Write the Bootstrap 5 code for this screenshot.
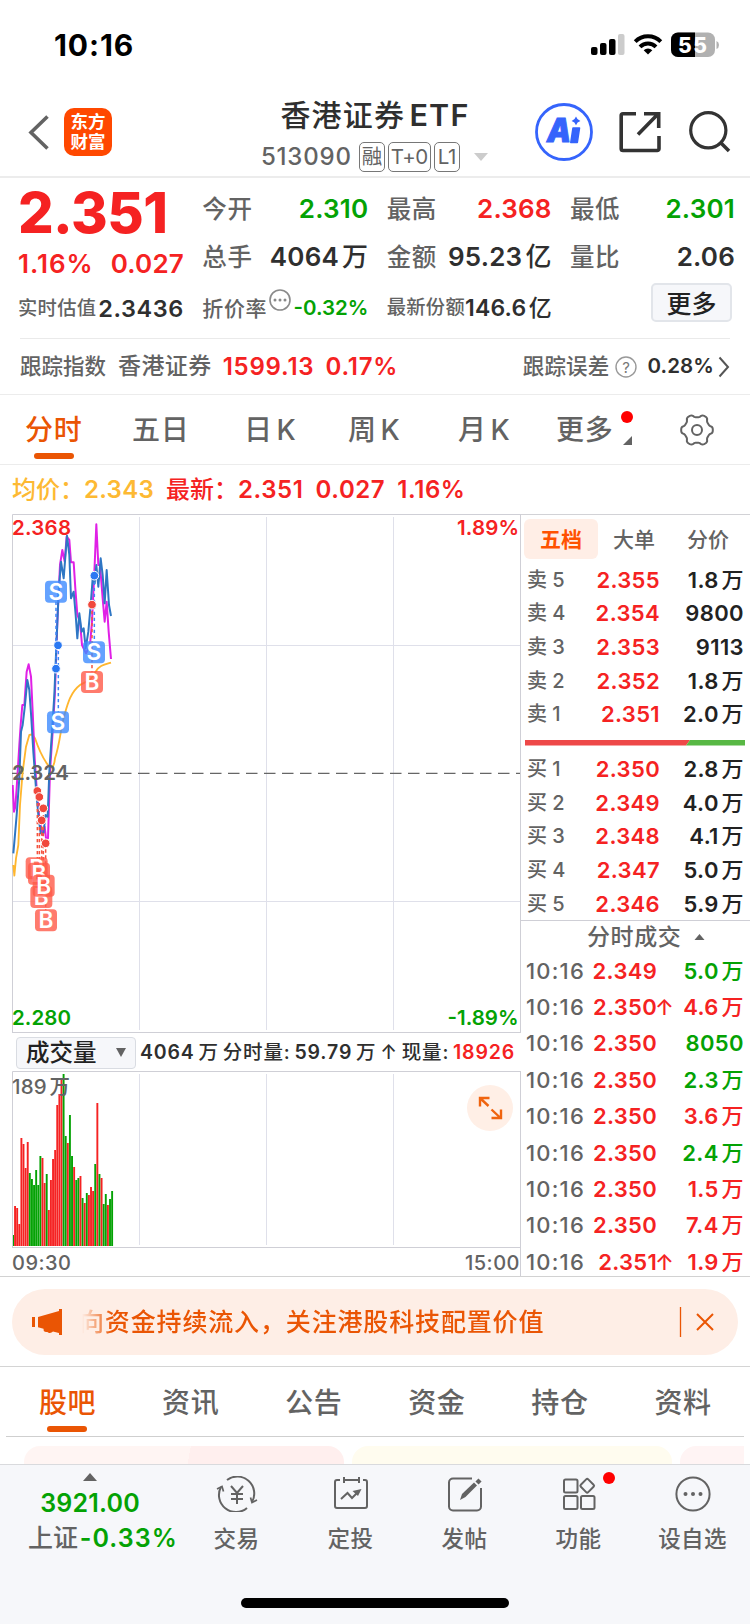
<!DOCTYPE html>
<html lang="zh-CN">
<head>
<meta charset="utf-8">
<meta name="viewport" content="width=device-width, initial-scale=1">
<title>香港证券ETF 513090</title>
<link href="https://cdn.jsdelivr.net/npm/bootstrap@5.3.0/dist/css/bootstrap.min.css" rel="stylesheet">
<style>
:root{--up:#f52222;--down:#04a204;--ink:#2f2f2f;--dim:#636363;--brand:#ea5504;--rule:#d2d2d6}
body{width:750px;height:1624px;overflow:hidden;background:#fff;color:var(--ink);font-family:Inter,"Noto Sans CJK SC",sans-serif;font-weight:500;line-height:1;white-space:nowrap}
svg{display:block;flex:none}
.dim{color:var(--dim)}.brand{color:var(--brand)}
.fig{font-weight:600}
.statusbar{height:90px;padding:0 31px 0 54px}
.clock{font-size:30px;font-weight:700;color:#000;letter-spacing:.9px}
.navtop{height:88px;border-bottom:2px solid #ececec}
.logo{width:48px;height:48px;border-radius:10px;background:#ff4800;color:#fff;font-size:17.5px;line-height:19.5px;font-weight:700;padding-top:4px}
.title{font-size:30px;letter-spacing:1.2px;line-height:36px;word-spacing:-5px}
.code{font-size:24px;letter-spacing:.8px;color:var(--dim)}
.tagbox{height:30px;border:1.5px solid #777;border-radius:5px;font-size:20.5px;font-weight:400;color:var(--dim);padding:0 2px;letter-spacing:-.4px}
.quote{height:160px;margin:0 15px 0 18px}
.c1{width:166px}.c2{width:166px}.c3{width:165px}.c4{width:165px}
.row1{height:48px}
.row3{height:54px}
.lab{font-size:24.5px;letter-spacing:.6px;color:var(--dim)}
.num{font-size:26px;letter-spacing:.2px;word-spacing:-4px}
.price{font-size:56px;font-weight:800;height:70px;line-height:70px;letter-spacing:-.6px;margin-bottom:-2px}
.lab-s{font-size:19.3px;letter-spacing:.3px;color:var(--dim)}
.morebtn{width:81px;height:39px;margin-right:3px;border:2px solid #e2e5ea;border-radius:5px;background:#f6f7fa;font-size:25px;color:#222;padding-top:3px}
.track{height:56px;margin:0 20px;border-top:1px solid #eaeaea}
.tabs1{height:71px;border-top:1px solid #ececec;border-bottom:1px solid #ececec;font-size:28px;color:var(--dim);letter-spacing:.8px;word-spacing:-4.5px}
.tabs1>div{position:relative}
.mark-line{position:absolute;height:6px;width:40px;border-radius:3px;background:var(--brand)}
.info{height:49px;padding:1px 0 0 12px;font-size:24px}
.info .fig{letter-spacing:.6px}
.market{height:763px;border-bottom:1px solid #d2d2d2}
.chartcol{width:509px;margin-left:12px}
.volhead{height:38px;font-size:19.5px;letter-spacing:.85px;word-spacing:-2.2px;padding-top:1px}
.volbtn{width:120px;height:32px;border:1.5px solid #d9dce2;border-radius:4px;background:#f6f7fa;font-size:23.5px;color:#222;letter-spacing:0}
.axis{height:28px;font-size:20px;color:var(--dim);letter-spacing:.5px;padding-top:1px}
.expand{position:absolute;left:455px;top:14px}
.side{width:229px;border-top:1px solid var(--rule);overflow:hidden}
.sidetabs{height:48px;font-size:21px;color:var(--dim);padding:4px 0 0 3px}
.sidetabs .on{width:74px;height:40px;border-radius:6px;background:#ffeee6;color:#ff5200;font-weight:700}
.depth{padding:0 6px;font-size:22px}
.depth>div{height:33.65px}
.k{width:54px;font-size:20px;letter-spacing:.5px;word-spacing:-1px}
.p{width:79px;text-align:right;letter-spacing:.35px}
.v{width:84px;text-align:right;color:#222;letter-spacing:.4px;word-spacing:-3.5px}
.ticks>div{height:36.4px;padding:0 6px 0 5px;font-size:22px}
.up,.v.up{color:var(--up)}.down,.v.down{color:var(--down)}
.banner{margin:12px 12px 11px;height:66px;border-radius:33px;background:#feeee6;color:var(--brand);font-size:25px;letter-spacing:.85px}
.marquee{-webkit-mask-image:linear-gradient(90deg,transparent 0,#000 30px);mask-image:linear-gradient(90deg,transparent 0,#000 30px);width:500px;overflow:hidden;height:34px}
.tabs2{height:70px;border-top:1px solid #d4d4d4;font-size:28px;color:var(--dim);letter-spacing:.6px;padding:3px 0 0 6px}
.tabs2>div{width:123.1px;position:relative}
.peek{height:28px;margin:0 6px;padding:9px 0 0 18px;border-top:1px solid #cfcfcf;overflow:hidden}
.peek>div{height:40px;border-radius:16px;flex:none}
.dock{height:160px;border-top:1px solid #d9dadd;background:#f6f7fa;position:relative}
.dock .it{width:114px;font-size:22.5px;letter-spacing:.4px;color:var(--dim);padding-top:11px;position:relative}
.dock .lb{height:36px;line-height:36px;margin-top:9px;margin-left:-1px}
.homebar{position:absolute;left:241px;top:133px;width:268px;height:10px;border-radius:5px;background:#000}
.dot{position:absolute;width:12px;height:12px;border-radius:6px;background:#f00}
</style>
</head>
<body>
<header>
<div class="statusbar d-flex align-items-center justify-content-between">
 <span class="clock">10:16</span>
 <svg width="130" height="28" viewBox="0 0 130 28"><g transform="translate(-589 -31)">
  <rect x="591" y="47" width="6.5" height="8" rx="2"/><rect x="600" y="43" width="6.5" height="12" rx="2"/><rect x="609" y="39" width="6.5" height="16" rx="2"/><rect x="618" y="34" width="6.5" height="21" rx="2" fill="#ccc"/>
  <g fill="none" stroke="#000" stroke-width="4"><path d="M635.2 41.6a18.2 18.2 0 0 1 25.6 0"/><path d="M640 46.8a11.4 11.4 0 0 1 16 0"/></g><path d="M648 54.6l-4.3-4.4a6.2 6.2 0 0 1 8.600 0z"/>
  <rect x="671" y="32.500" width="44" height="24.500" rx="7" fill="#b1b1b1"/><path d="M695 32.500h-17a7 7 0 0 0-7 7V50a7 7 0 0 0 7 7h17z"/><path d="M716.500 41q2.500 1 2.500 4t-2.500 4z" fill="#b1b1b1"/>
  <text x="692.500" y="52.500" font-size="21" font-weight="800" fill="#fff" text-anchor="middle" textLength="29">55</text></g></svg>
</div>
<div class="navtop d-flex">
 <svg width="64" height="86" viewBox="0 2 64 86"><path d="M47.500 28.500 31 44.500 47.500 60.500" fill="none" stroke="#636363" stroke-width="3.6"/></svg>
 <div class="logo text-center" style="margin-top:18px">东方<br>财富</div>
 <div class="flex-fill d-flex flex-column align-items-center" style="padding-left:103px">
  <div class="title" style="margin-top:7px">香港证券 <span style="font-size:30.500px;font-weight:600">ETF</span></div>
  <div class="d-flex align-items-center" style="height:30px;gap:3px;margin-top:9px">
   <span class="code" style="margin-right:4px">513090</span><span class="tagbox d-flex align-items-center">融</span><span class="tagbox d-flex align-items-center">T+0</span><span class="tagbox d-flex align-items-center" style="padding:0 3px">L1</span>
   <svg style="margin-left:10px" width="16" height="8" viewBox="0 0 16 8"><path d="M1 0h14L8 8z" fill="#ccc"/></svg>
  </div>
 </div>
 <svg width="215" height="86" viewBox="535 90 215 86" fill="none" stroke="#333" stroke-width="3.600">
  <circle cx="564" cy="132" r="27.500" stroke="#3564fc" stroke-width="2.800"/>
  <text x="547" y="142" font-size="33" font-weight="900" font-style="italic" fill="#3564fc" stroke="#3564fc" stroke-width="1" textLength="24" lengthAdjust="spacingAndGlyphs">A</text><path d="M573 128h6.500l-2.200 14.500h-6.500z" fill="#3564fc" stroke="#3564fc" stroke-width="1.600" stroke-linejoin="round"/><path d="M576 116.500q1 3.300 4.400 4.400-3.400 1-4.400 4.400-1-3.400-4.400-4.400 3.400-1.100 4.400-4.400z" fill="#3564fc" stroke="none"/>
  <path d="M636 113.700h-13a1.800 1.800 0 0 0-1.800 1.800v33.200a1.800 1.800 0 0 0 1.800 1.800h34.200a1.800 1.800 0 0 0 1.800-1.800V136"/><path d="M644 113.700h14.700V128M658 114l-20 20.500"/>
  <circle cx="708.300" cy="130.300" r="17.600" stroke-width="3.200"/><path d="M720.500 142.500l8.500 8.500"/>
 </svg>
</div>
</header>

<section class="quote d-flex justify-content-between">
 <div class="c1">
  <div class="price up">2.351</div>
  <div class="num fig up d-flex justify-content-between align-items-center" style="height:36px"><span style="letter-spacing:1px">1.16%</span><span>0.027</span></div>
  <div class="d-flex justify-content-between align-items-center row3"><span class="lab-s">实时估值</span><span class="fig" style="font-size:23.500px;letter-spacing:.6px">2.3436</span></div>
 </div>
 <div class="c2" style="padding-top:7px">
  <div class="row1 d-flex justify-content-between align-items-center"><span class="lab">今开</span><span class="num fig down">2.310</span></div>
  <div class="row1 d-flex justify-content-between align-items-center"><span class="lab">总手</span><span class="num"><span class="fig">4064</span> 万</span></div>
  <div class="row3 d-flex justify-content-between align-items-center"><span class="lab" style="font-size:21px">折价率</span><svg width="24" height="40" viewBox="0 0 24 40"><circle cx="12" cy="12" r="10" fill="none" stroke="#8a8a8a" stroke-width="1.600"/><g fill="#888"><circle cx="7" cy="12" r="1.500"/><circle cx="12" cy="12" r="1.500"/><circle cx="17" cy="12" r="1.500"/></g></svg><span class="down fig" style="font-size:20.500px">-0.32%</span></div>
 </div>
 <div class="c3" style="padding-top:7px">
  <div class="row1 d-flex justify-content-between align-items-center"><span class="lab">最高</span><span class="num fig up">2.368</span></div>
  <div class="row1 d-flex justify-content-between align-items-center"><span class="lab">金额</span><span class="num"><span class="fig">95.23</span> 亿</span></div>
  <div class="row3 d-flex justify-content-between align-items-center"><span class="lab-s">最新份额</span><span style="font-size:23px;letter-spacing:.2px;word-spacing:-4px"><span class="fig">146.6</span> 亿</span></div>
 </div>
 <div class="c4" style="padding-top:7px">
  <div class="row1 d-flex justify-content-between align-items-center"><span class="lab">最低</span><span class="num fig down">2.301</span></div>
  <div class="row1 d-flex justify-content-between align-items-center"><span class="lab">量比</span><span class="num fig">2.06</span></div>
  <div class="d-flex justify-content-end" style="padding-top:2px"><div class="morebtn d-flex align-items-center justify-content-center">更多</div></div>
 </div>
</section>

<section class="track d-flex align-items-center">
 <span class="dim" style="font-size:21.500px">跟踪指数</span><span class="dim" style="font-size:23px;margin-left:12px;letter-spacing:.4px">香港证券</span><span class="up fig" style="font-size:24px;margin-left:11px;letter-spacing:.8px">1599.13</span><span class="up fig" style="font-size:24px;margin-left:11px;letter-spacing:.8px">0.17%</span>
 <span class="dim ms-auto" style="font-size:21.500px;letter-spacing:.2px">跟踪误差</span>
 <svg style="margin:0 11px 0 5px" width="22" height="22" viewBox="0 0 22 22"><circle cx="11" cy="11" r="10" fill="none" stroke="#999" stroke-width="1.400"/><text x="11" y="16.500" font-size="15" font-weight="400" fill="#777" text-anchor="middle">?</text></svg>
 <span class="fig" style="font-size:20.500px;letter-spacing:.1px">0.28%</span>
 <svg class="ms-1" width="12" height="22" viewBox="0 0 12 22"><path d="M1.500 1.500 10 11 1.500 20.500" fill="none" stroke="#555" stroke-width="2"/></svg>
</section>

<nav class="tabs1 d-flex align-items-center">
 <div class="brand" style="margin-left:25px;width:107px">分时<i class="mark-line" style="left:9px;top:37px"></i></div>
 <div style="width:112px">五日</div><div style="width:104px">日 K</div><div style="width:110px">周 K</div><div style="width:98px">月 K</div>
 <div style="width:123px">更多<i class="dot" style="left:65px;top:-5px"></i><svg style="position:absolute;left:67px;top:20px" width="9" height="9" viewBox="0 0 9 9"><path d="M9 0v9H0z" fill="#636363"/></svg></div>
 <svg width="36" height="36" viewBox="-18 -18 36 36" fill="none" stroke="#636363" stroke-width="2"><circle r="5"/><path id="gear"/></svg>
</nav>

<div class="info d-flex align-items-center"><span style="color:#fdb933;width:154px">均价：<span class="fig" style="letter-spacing:.3px">2.343</span></span><span class="up">最新：</span><span class="up fig" style="margin-right:12px">2.351</span><span class="up fig" style="margin-right:12px">0.027</span><span class="up fig">1.16%</span></div>

<main class="market d-flex">
 <div class="chartcol">
  <svg width="509" height="519" viewBox="12 514 509 519">
   <g fill="none" stroke="#dfe0ea"><path d="M139.500 517v513M266.500 517v513M393.500 517v513M12 645.500h508M12 901.500h508"/><path d="M12.500 1032V514.500H521M520.500 514v519M12 1032.500h509" stroke="#cfcfd6"/></g>
   <path d="M12 773.300h508" stroke="#666" stroke-width="1.300" stroke-dasharray="11.500 6.500" fill="none"/>
   <g fill="none" stroke-linejoin="round" transform="translate(0 505) scale(.33333)">
    <path stroke="#ffb62e" stroke-width="5.500" d="M40 1080L43 1112 48 1060 55 1020 60 900 68 800 78 725 88 690 96 688 105 700Q120 745 140 775T165 760C180 715 182 670 192 635S210 563 240 540C262 528 275 525 285 503S315 478 333 473"/>
    <path stroke="#e020e6" stroke-width="6" d="M38 840L42 920 46 905 50 850 58 720 62 660 67 600 73 600 80 500 86 478 93 515 98 620 104 760 110 850 118 940 128 990 134 965 138 1000 144 1000 150 800 158 680 165 560 172 350 180 180 187 135 194 170 200 95 208 105 213 172 221 172 226 250 232 330 240 350 246 420 258 445 270 420 276 350 284 180 289 58 295 180 300 180 308 280 314 350 320 290 326 380 333 462"/>
    <path stroke="#2e76c4" stroke-width="6" d="M40 1045L44 1000 50 930 58 820 63 680 68 660 75 600 82 525 88 555 94 640 100 740 108 850 115 930 122 985 130 985 137 930 143 935 148 800 156 680 163 570 170 400 176 260 183 170 191 220 201 92 208 150 213 280 221 260 227 330 232 400 238 325 245 380 251 370 257 430 265 380 272 300 278 220 284 235 289 180 295 245 302 160 308 210 314 295 320 195 327 300 333 333"/>
    <g stroke-width="4.500" stroke-dasharray="10 8"><path stroke="#3f86f8" d="M168 290V490M175 420V620M283 212V410"/><path stroke="#f4523e" d="M276 300V500M112 858V1060M118 876V1070M130 912V1110M125 946V1140M137 1015V1215"/></g>
    <g stroke="#fff" stroke-width="3"><g fill="#2a78f2"><circle cx="174" cy="421" r="13"/><circle cx="168" cy="491" r="13"/><circle cx="283" cy="212" r="13"/></g><g fill="#f0483c"><circle cx="276" cy="299" r="13"/><circle cx="112" cy="858" r="13"/><circle cx="118" cy="876" r="13"/><circle cx="130" cy="910" r="13"/><circle cx="125" cy="946" r="13"/><circle cx="137" cy="1015" r="13"/></g></g>
    <g stroke="none" font-size="68" font-weight="600" text-anchor="middle" id="flags"></g>
   </g>
   <g font-size="20.500" class="fig"><text x="12" y="535" fill="#f52222" textLength="59">2.368</text><text x="457" y="535" fill="#f52222" textLength="62">1.89%</text><text x="12" y="780" fill="#636363" textLength="57">2.324</text><text x="12" y="1025" fill="#04a204" textLength="59">2.280</text><text x="447.500" y="1025" fill="#04a204" textLength="71">-1.89%</text></g>
  </svg>
  <div class="volhead d-flex align-items-center">
   <div class="volbtn d-flex align-items-center justify-content-between" style="margin-left:4px;padding:0 9px">成交量<svg width="10" height="9" viewBox="0 0 10 9"><path d="M0 0h10L5 9z" fill="#636363"/></svg></div>
   <span style="margin-left:4px"><span class="fig">4064</span> 万 分时量: <span class="fig">59.79</span> 万 ↑ 现量: <span class="up fig">18926</span></span>
  </div>
  <div class="position-relative">
   <svg width="509" height="177" viewBox="12 1071 509 177">
    <g fill="none" stroke="#dfe0ea"><path d="M139.500 1074v171M266.500 1074v171M393.500 1074v171"/><path d="M12.500 1247V1071.500H521M520.500 1071v177M12 1247.500h509" stroke="#cfcfd6"/></g>
    <g id="bars"></g>
    <text x="12" y="1094" font-size="20.500" fill="#636363" textLength="58" word-spacing="-3">189 万</text>
   </svg>
   <svg class="expand" width="46" height="46" viewBox="0 0 46 46"><circle cx="23" cy="23" r="23" fill="#ffefe6"/><path d="M13 21.500V13h9.500M13.500 13.500l8 7.500M34 24.500V33h-9.500M33.500 33l-9-8.500" fill="none" stroke="#f0640f" stroke-width="2.400"/></svg>
  </div>
  <div class="axis d-flex justify-content-between align-items-center" style="border-right:1px solid #cfcfd6"><span>09:30</span><span>15:00</span></div>
 </div>
 <div class="side">
  <div class="sidetabs d-flex"><div class="on d-flex align-items-center justify-content-center">五档</div><div class="d-flex align-items-center" style="height:40px;margin-left:15px">大单</div><div class="d-flex align-items-center" style="height:40px;margin-left:32px">分价</div></div>
  <div class="depth" id="asks"></div>
  <svg width="229" height="21" viewBox="521 731 229 21"><path d="M525 740h165l-4 5.500H525z" fill="#ee4848"/><path d="M690 740h55v5.500h-59z" fill="#58b844"/></svg>
  <div class="depth" id="bids"></div>
  <div class="d-flex align-items-center dim" style="border-top:1px solid #cfcfd6;height:32px;font-size:23px;letter-spacing:.6px;padding:2px 0 0 66px">分时成交<svg style="margin-left:13px;margin-top:-2px" width="11" height="6" viewBox="0 0 10 6"><path d="M5 0l5 6H0z" fill="#636363"/></svg></div>
  <div class="ticks" id="ticks"></div>
 </div>
</main>

<div class="banner d-flex align-items-center">
 <svg width="70" height="66" viewBox="12 1289 70 66" fill="#ea5504"><path d="M32 1317h3v10h-3zM38 1317l21-6v-2h3v26h-3v-2l-6-1.500q-2 2-4.500 1.200l-1.200-.8q-2 .5-3.500-.8l-.3-2.300-5.500-1.500z"/></svg>
 <div class="marquee d-flex align-items-center"><span style="margin-left:-3px">向资金持续流入，关注港股科技配置价值</span></div>
 <svg class="ms-auto" width="60" height="66" viewBox="678 1289 60 66" fill="none" stroke="#ea5504"><path d="M680.500 1307v30" stroke-width="1.300"/><path d="M697 1314l16 16M713 1314l-16 16" stroke-width="2"/></svg>
</div>

<nav class="tabs2 d-flex align-items-center text-center"><div class="brand">股吧<i class="mark-line" style="left:41px;top:37px"></i></div><div>资讯</div><div>公告</div><div>资金</div><div>持仓</div><div>资料</div></nav>
<div class="peek d-flex gap-2"><div style="width:320px;background:linear-gradient(100deg,#fff5f3 51%,#ffefee 51%)"></div><div style="width:320px;background:#fffcef"></div><div style="width:320px;background:#fff4f4"></div></div>

<footer class="dock d-flex text-center">
 <div style="width:180px;padding-top:8px" class="d-flex flex-column align-items-center"><svg width="14" height="8" viewBox="0 0 14 8"><path d="M7 0l7 8H0z" fill="#636363"/></svg><div class="down fig" style="font-size:25px;margin-top:10px;height:25px;letter-spacing:.2px">3921.00</div><div style="font-size:25px;margin-top:10px;padding-left:26px"><span class="dim">上证</span> <span class="down fig" style="margin-left:-5px;letter-spacing:1.1px">-0.33%</span></div></div>
 <div class="it"><svg class="mx-auto" width="42" height="36" viewBox="216 1476 42 36" fill="none" stroke="#636363" stroke-width="2"><path d="M227 1480A17 17 0 0 1 252 1502M247 1508A17 17 0 0 1 221 1487"/><path d="M217 1489l5-2.500 1.500 5M257 1500l-5 2.500-1.500-5" stroke-width="1.700"/><path d="M231 1486l6 7 6-7M237 1493v11M231 1494h12M231 1499h12"/></svg><div class="lb">交易</div></div>
 <div class="it"><svg class="mx-auto" width="40" height="36" viewBox="331 1476 40 36" fill="none" stroke="#636363" stroke-width="2"><path d="M340 1480h-3a2 2 0 0 0-2 2v24a2 2 0 0 0 2 2h28a2 2 0 0 0 2-2v-24a2 2 0 0 0-2-2h-2M344 1480h15M344 1477v6M359 1477v6M341 1499l6.500-6 4.500 5 7-7"/><path d="M352.500 1491l9-2-3.500 7z" fill="#636363" stroke="none"/></svg><div class="lb">定投</div></div>
 <div class="it"><svg class="mx-auto" width="40" height="36" viewBox="445 1476 40 36" fill="none" stroke="#636363" stroke-width="2"><path d="M472 1478.500h-19a4 4 0 0 0-4 4v24a4 4 0 0 0 4 4h24a4 4 0 0 0 4-4V1488"/><path d="M460 1500l2-6 12-11.500 3 3L465.500 1497z" fill="#636363" stroke="none"/><path d="M477 1483l3-3" stroke-width="4.500"/></svg><div class="lb">发帖</div></div>
 <div class="it"><svg class="mx-auto" width="40" height="36" viewBox="559 1476 40 36" fill="none" stroke="#636363" stroke-width="2"><rect x="564" y="1479.500" width="13.500" height="13" rx="1.500"/><rect x="564" y="1496" width="13.500" height="13" rx="1.500"/><rect x="581" y="1496" width="13.500" height="13" rx="1.500"/><rect x="582" y="1480.500" width="10.500" height="10.500" rx="1.500" transform="rotate(45 587.200 1485.700)"/></svg><div class="lb">功能</div><i class="dot" style="left:81px;top:7px"></i></div>
 <div class="it"><svg class="mx-auto" width="40" height="36" viewBox="673 1476 40 36"><circle cx="693" cy="1494" r="16.600" fill="none" stroke="#636363" stroke-width="2"/><g fill="#636363"><circle cx="685.500" cy="1494" r="2"/><circle cx="693" cy="1494" r="2"/><circle cx="700.500" cy="1494" r="2"/></g></svg><div class="lb">设自选</div></div>
 <div class="homebar"></div>
</footer>

<script src="https://cdn.jsdelivr.net/npm/bootstrap@5.3.0/dist/js/bootstrap.bundle.min.js"></script>
<script>
const amount=v=>v.replace(/^[\d.]+/,'<span class="fig">$&</span>');
const line=([k,p,v])=>`<div class="d-flex align-items-center"><span class="k dim">${k}</span><span class="p fig up">${p}</span><span class="v">${amount(v)}</span></div>`;
const fill=(id,rows)=>document.getElementById(id).innerHTML=rows.join('');
fill('asks',[['卖 5','2.355','1.8 万'],['卖 4','2.354','9800'],['卖 3','2.353','9113'],['卖 2','2.352','1.8 万'],['卖 1','2.351','2.0 万']].map(line));
fill('bids',[['买 1','2.350','2.8 万'],['买 2','2.349','4.0 万'],['买 3','2.348','4.1 万'],['买 4','2.347','5.0 万'],['买 5','2.346','5.9 万']].map(line));
fill('ticks',[['2.349','5.0 万',0],['2.350↑','4.6 万',1],['2.350','8050',0],['2.350','2.3 万',0],['2.350','3.6 万',1],['2.350','2.4 万',0],['2.350','1.5 万',1],['2.350','7.4 万',1],['2.351↑','1.9 万',1]].map(([p,v,u])=>`<div class="d-flex align-items-center"><span class="dim" style="width:60px;letter-spacing:1.200px">10:16</span><span class="up fig text-end" style="width:71px;letter-spacing:.3px">${p.slice(0,5)}</span><span class="up" style="width:14px;margin-left:-2px">${p.slice(5)}</span><span class="v ${u?'up':'down'}" style="width:75px">${amount(v)}</span></div>`));
const vol='g11 r40 r38 r22 r108 r102 r78 r104 g73 g67 g61 g76 g61 g90 r88 r63 g72 r36 r66 r87 r96 r141 r152 r166 g172 g110 r103 g131 g90 r79 g66 g68 r70 g48 r43 g53 r51 r59 r55 g82 r143 g72 r68 g42 g52 r41 g47 g55'.split(' ');
document.getElementById('bars').innerHTML=vol.map((s,i)=>{const h=+s.slice(1),x=i?12+i*2.11:13;return `<rect x="${x.toFixed(2)}" y="${1246-h}" width="${i?1.9:1}" height="${h}" fill="${s[0]=='r'?'#f52222':'#04a204'}"/>`}).join('');
document.getElementById('flags').innerHTML=[[168,260,'S'],[174,652,'S'],[282,442,'S'],[276,531,'B'],[110,1090,'B'],[117,1106,'B'],[124,1176,'B'],[131,1142,'B'],[138,1246,'B']].map(([x,y,t])=>`<rect x="${x-33}" y="${y-33}" width="66" height="66" rx="12" fill="${t=='S'?'#3d8bff':'#ff5a48'}" fill-opacity=".8"/><text x="${x}" y="${y+24}" fill="#fff">${t}</text>`).join('');
let d='';for(let i=0;i<=120;i++){const a=i/120*2*Math.PI,r=14.3+1.6*Math.tanh(1.8*Math.cos(6*a));d+=(i?'L':'M')+(r*Math.cos(a)).toFixed(2)+' '+(r*Math.sin(a)).toFixed(2)}
document.getElementById('gear').setAttribute('d',d+'Z');
</script>
</body>
</html>
